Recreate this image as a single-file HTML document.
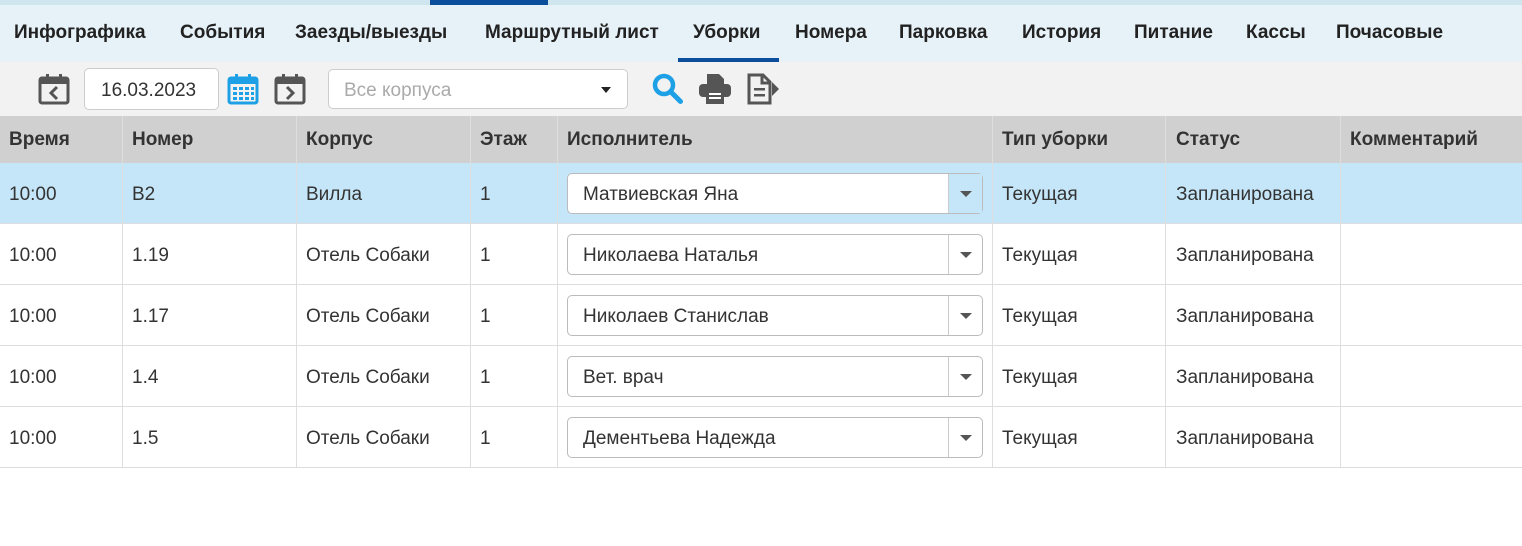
<!DOCTYPE html>
<html><head><meta charset="utf-8"><style>
*{box-sizing:border-box;margin:0;padding:0}
body{width:1522px;height:546px;background:#fff;font-family:"Liberation Sans",sans-serif;color:#333;position:relative;overflow:hidden}
.top{position:absolute;left:0;top:0;width:1522px;height:5px;background:#cfe6ee}
.top i{position:absolute;left:430px;width:118px;height:5px;background:#0b4f9c}
.nav{position:absolute;top:5px;left:0;width:1522px;height:57px;background:#e6f2f8}
.nav span{position:absolute;top:17px;font-weight:bold;font-size:19px;color:#222}
.nav .act{position:absolute;left:678px;top:53px;width:101px;height:4px;background:#0b4f9c}
.tb{position:absolute;top:62px;left:0;width:1522px;height:54px;background:#f2f2f2}
.inp{position:absolute;background:#fff;border:1px solid #ccc;border-radius:5px}
.hd{position:absolute;top:116px;left:0;width:1522px;height:47px;background:#d0d0d0}
.c{position:absolute;font-size:19px}
.hd .c{top:13px;font-weight:bold;color:#333}
.row{position:absolute;left:0;width:1522px;height:61px;border-bottom:1px solid #ddd}
.row .c{top:21px;color:#333}
.vl{position:absolute;top:116px;height:352px;width:1px;background:#dedede}
.sel{position:absolute;left:567px;top:10px;width:416px;height:41px;background:#fff;border:1px solid #bbb;border-radius:5px}
.sel b{position:absolute;left:15px;top:10px;font-weight:normal;font-size:19px;color:#333}
.sel i{position:absolute;right:0;top:0;width:34px;height:39px;border-left:1px solid #ccc}
.sel i:after{content:"";position:absolute;left:11px;top:17px;border:6px solid transparent;border-top:6px solid #555;border-bottom:0}
</style></head><body>
<div class="top"><i></i></div>
<div class="nav">
<span style="left:14px">Инфографика</span><span style="left:180px">События</span><span style="left:295px">Заезды/выезды</span><span style="left:485px">Маршрутный лист</span><span style="left:693px">Уборки</span><span style="left:795px">Номера</span><span style="left:899px">Парковка</span><span style="left:1022px">История</span><span style="left:1134px">Питание</span><span style="left:1246px">Кассы</span><span style="left:1336px">Почасовые</span>
<div class="act"></div></div>
<div class="tb">
<svg style="position:absolute;left:38px;top:11px" width="32" height="32" viewBox="0 0 32 32"><rect x="2" y="5" width="28" height="25" rx="2" fill="none" stroke="#555" stroke-width="3"/><rect x="2" y="5" width="28" height="6" fill="#555"/><rect x="8" y="1" width="3" height="7" fill="#555"/><rect x="21" y="1" width="3" height="7" fill="#555"/><path d="M19 14l-6 6 6 6" fill="none" stroke="#555" stroke-width="3"/></svg>
<div class="inp" style="left:84px;top:6px;width:135px;height:42px"><span style="position:absolute;left:16px;top:11px;font-size:19px">16.03.2023</span></div>
<svg style="position:absolute;left:227px;top:11px" width="32" height="32" viewBox="0 0 32 32"><rect x="2" y="5" width="28" height="25" rx="2" fill="none" stroke="#1ea0e6" stroke-width="3"/><rect x="2" y="5" width="28" height="6" fill="#1ea0e6"/><rect x="8" y="1" width="3" height="7" fill="#1ea0e6"/><rect x="21" y="1" width="3" height="7" fill="#1ea0e6"/><g fill="#1ea0e6"><rect x="6" y="14" width="4" height="3"/><rect x="12" y="14" width="4" height="3"/><rect x="18" y="14" width="4" height="3"/><rect x="24" y="14" width="3" height="3"/><rect x="6" y="19" width="4" height="3"/><rect x="12" y="19" width="4" height="3"/><rect x="18" y="19" width="4" height="3"/><rect x="24" y="19" width="3" height="3"/><rect x="6" y="24" width="4" height="3"/><rect x="12" y="24" width="4" height="3"/><rect x="18" y="24" width="4" height="3"/><rect x="24" y="24" width="3" height="3"/></g></svg>
<svg style="position:absolute;left:274px;top:11px" width="32" height="32" viewBox="0 0 32 32"><rect x="2" y="5" width="28" height="25" rx="2" fill="none" stroke="#555" stroke-width="3"/><rect x="2" y="5" width="28" height="6" fill="#555"/><rect x="8" y="1" width="3" height="7" fill="#555"/><rect x="21" y="1" width="3" height="7" fill="#555"/><path d="M13 14l6 6-6 6" fill="none" stroke="#555" stroke-width="3"/></svg>
<div class="inp" style="left:328px;top:7px;width:300px;height:40px"><span style="position:absolute;left:15px;top:10px;font-size:19px;color:#aaa">Все корпуса</span><span style="position:absolute;left:272px;top:17px;border:5px solid transparent;border-top:6px solid #222;border-bottom:0"></span></div>
<svg style="position:absolute;left:651px;top:10px" width="34" height="34" viewBox="0 0 34 34"><circle cx="13" cy="13" r="9" fill="none" stroke="#1ea0e6" stroke-width="4.5"/><path d="M19.5 19.5l10 10" stroke="#1ea0e6" stroke-width="5" stroke-linecap="round"/></svg>
<svg style="position:absolute;left:698px;top:10px" width="34" height="34" viewBox="0 0 34 34"><path d="M9 2h12l5 5v6H9z" fill="#555"/><rect x="1" y="12" width="32" height="13" rx="4" fill="#555"/><rect x="8" y="18" width="18" height="14" fill="#555"/><rect x="11" y="21" width="12" height="2" fill="#fff"/><rect x="11" y="25" width="12" height="2" fill="#fff"/></svg>
<svg style="position:absolute;left:746px;top:10px" width="34" height="34" viewBox="0 0 34 34"><path d="M3 3h14l7 7v21H3z" fill="none" stroke="#555" stroke-width="3"/><path d="M16 3v8h8" fill="none" stroke="#555" stroke-width="3"/><rect x="8" y="16" width="11" height="2.5" fill="#555"/><rect x="8" y="22" width="11" height="2.5" fill="#555"/><path d="M26 10l7 7-7 7z" fill="#555"/></svg>
</div>
<div class="hd">
<span class="c" style="left:9px">Время</span><span class="c" style="left:132px">Номер</span><span class="c" style="left:306px">Корпус</span><span class="c" style="left:480px">Этаж</span><span class="c" style="left:567px">Исполнитель</span><span class="c" style="left:1002px">Тип уборки</span><span class="c" style="left:1176px">Статус</span><span class="c" style="left:1350px">Комментарий</span>
</div>
<div class="row" style="top:163px;background:#c5e6f8"><span class="c" style="left:9px">10:00</span><span class="c" style="left:132px">B2</span><span class="c" style="left:306px">Вилла</span><span class="c" style="left:480px">1</span><div class="sel"><b>Матвиевская Яна</b><i style="background:#c5e6f8"></i></div><span class="c" style="left:1002px">Текущая</span><span class="c" style="left:1176px">Запланирована</span></div>
<div class="row" style="top:224px"><span class="c" style="left:9px">10:00</span><span class="c" style="left:132px">1.19</span><span class="c" style="left:306px">Отель Собаки</span><span class="c" style="left:480px">1</span><div class="sel"><b>Николаева Наталья</b><i></i></div><span class="c" style="left:1002px">Текущая</span><span class="c" style="left:1176px">Запланирована</span></div>
<div class="row" style="top:285px"><span class="c" style="left:9px">10:00</span><span class="c" style="left:132px">1.17</span><span class="c" style="left:306px">Отель Собаки</span><span class="c" style="left:480px">1</span><div class="sel"><b>Николаев Станислав</b><i></i></div><span class="c" style="left:1002px">Текущая</span><span class="c" style="left:1176px">Запланирована</span></div>
<div class="row" style="top:346px"><span class="c" style="left:9px">10:00</span><span class="c" style="left:132px">1.4</span><span class="c" style="left:306px">Отель Собаки</span><span class="c" style="left:480px">1</span><div class="sel"><b>Вет. врач</b><i></i></div><span class="c" style="left:1002px">Текущая</span><span class="c" style="left:1176px">Запланирована</span></div>
<div class="row" style="top:407px"><span class="c" style="left:9px">10:00</span><span class="c" style="left:132px">1.5</span><span class="c" style="left:306px">Отель Собаки</span><span class="c" style="left:480px">1</span><div class="sel"><b>Дементьева Надежда</b><i></i></div><span class="c" style="left:1002px">Текущая</span><span class="c" style="left:1176px">Запланирована</span></div>
<div class="vl" style="left:122px"></div><div class="vl" style="left:296px"></div><div class="vl" style="left:470px"></div><div class="vl" style="left:557px"></div><div class="vl" style="left:992px"></div><div class="vl" style="left:1165px"></div><div class="vl" style="left:1340px"></div>
</body></html>
